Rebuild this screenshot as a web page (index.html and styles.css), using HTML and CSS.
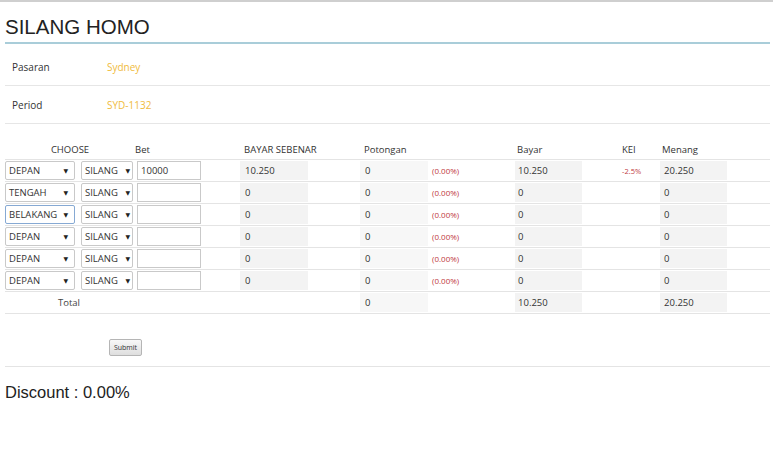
FILE: index.html
```html
<!DOCTYPE html>
<html>
<head>
<meta charset="utf-8">
<link rel="stylesheet" href="styles.css">
</head>
<body>
<div class="page">
  <h1 class="title">SILANG HOMO</h1>
  <div class="info">
    <div class="info-row first"><span class="info-label">Pasaran</span><span class="info-value">Sydney</span></div>
    <div class="info-row"><span class="info-label">Period</span><span class="info-value">SYD-1132</span></div>
  </div>

  <table class="bet-table">
    <colgroup>
      <col class="c1"><col class="c2"><col class="c3"><col class="c4"><col class="c5"><col class="c6"><col class="c7"><col class="c8"><col class="c9">
    </colgroup>
    <thead>
      <tr>
        <th colspan="2" class="h-center">CHOOSE</th>
        <th class="h-bet">Bet</th>
        <th class="h-bs">BAYAR SEBENAR</th>
        <th class="h-pot">Potongan</th>
        <th></th>
        <th class="h-small">Bayar</th>
        <th class="h-small">KEI</th>
        <th class="h-small">Menang</th>
      </tr>
    </thead>
    <tbody>
      <tr>
        <td><div class="sel sel1"><span>DEPAN</span><span class="arrow">▼</span></div></td>
        <td><div class="sel sel2"><span>SILANG</span><span class="arrow">▼</span></div></td>
        <td><div class="inp">10000</div></td>
        <td><div class="box box-bs">10.250</div></td>
        <td><div class="box box-pot">0</div></td>
        <td><span class="pct">(0.00%)</span></td>
        <td><div class="box box-bayar">10.250</div></td>
        <td><span class="kei">-2.5%</span></td>
        <td><div class="box box-menang">20.250</div></td>
      </tr>
      <tr>
        <td><div class="sel sel1"><span>TENGAH</span><span class="arrow">▼</span></div></td>
        <td><div class="sel sel2"><span>SILANG</span><span class="arrow">▼</span></div></td>
        <td><div class="inp"></div></td>
        <td><div class="box box-bs">0</div></td>
        <td><div class="box box-pot">0</div></td>
        <td><span class="pct">(0.00%)</span></td>
        <td><div class="box box-bayar">0</div></td>
        <td></td>
        <td><div class="box box-menang">0</div></td>
      </tr>
      <tr>
        <td><div class="sel sel1 focus"><span>BELAKANG</span><span class="arrow">▼</span></div></td>
        <td><div class="sel sel2"><span>SILANG</span><span class="arrow">▼</span></div></td>
        <td><div class="inp"></div></td>
        <td><div class="box box-bs">0</div></td>
        <td><div class="box box-pot">0</div></td>
        <td><span class="pct">(0.00%)</span></td>
        <td><div class="box box-bayar">0</div></td>
        <td></td>
        <td><div class="box box-menang">0</div></td>
      </tr>
      <tr>
        <td><div class="sel sel1"><span>DEPAN</span><span class="arrow">▼</span></div></td>
        <td><div class="sel sel2"><span>SILANG</span><span class="arrow">▼</span></div></td>
        <td><div class="inp"></div></td>
        <td><div class="box box-bs">0</div></td>
        <td><div class="box box-pot">0</div></td>
        <td><span class="pct">(0.00%)</span></td>
        <td><div class="box box-bayar">0</div></td>
        <td></td>
        <td><div class="box box-menang">0</div></td>
      </tr>
      <tr>
        <td><div class="sel sel1"><span>DEPAN</span><span class="arrow">▼</span></div></td>
        <td><div class="sel sel2"><span>SILANG</span><span class="arrow">▼</span></div></td>
        <td><div class="inp"></div></td>
        <td><div class="box box-bs">0</div></td>
        <td><div class="box box-pot">0</div></td>
        <td><span class="pct">(0.00%)</span></td>
        <td><div class="box box-bayar">0</div></td>
        <td></td>
        <td><div class="box box-menang">0</div></td>
      </tr>
      <tr>
        <td><div class="sel sel1"><span>DEPAN</span><span class="arrow">▼</span></div></td>
        <td><div class="sel sel2"><span>SILANG</span><span class="arrow">▼</span></div></td>
        <td><div class="inp"></div></td>
        <td><div class="box box-bs">0</div></td>
        <td><div class="box box-pot">0</div></td>
        <td><span class="pct">(0.00%)</span></td>
        <td><div class="box box-bayar">0</div></td>
        <td></td>
        <td><div class="box box-menang">0</div></td>
      </tr>
      <tr class="total-row">
        <td colspan="2" class="total-label">Total</td>
        <td></td>
        <td></td>
        <td><div class="box box-pot">0</div></td>
        <td></td>
        <td><div class="box box-bayar">10.250</div></td>
        <td></td>
        <td><div class="box box-menang">20.250</div></td>
      </tr>
    </tbody>
  </table>

  <div class="submit-row">
    <button class="submit" type="button">Submit</button>
  </div>

  <div class="discount">Discount : 0.00%</div>
</div>
</body>
</html>
```

FILE: styles.css
```css
html, body {
  margin: 0;
  padding: 0;
  background: #ffffff;
}

body {
  font-family: "Open Sans", "DejaVu Sans", sans-serif;
  color: #333333;
}

.page {
  border-top: 2px solid #cfcfcf;
  padding: 0 3px 0 5px;
  width: 765px;
}

.title {
  margin: 0;
  height: 42px;
  box-sizing: border-box;
  padding-top: 12px;
  font-family: "Liberation Sans", Arial, sans-serif;
  font-weight: normal;
  font-size: 20.5px;
  line-height: 26px;
  color: #222222;
  border-bottom: 2px solid #a9cdd9;
}

.info {
  display: flex;
  flex-direction: column;
}

.info-row {
  display: flex;
  align-items: center;
  height: 37px;
  border-bottom: 1px solid #e6e6e6;
  font-size: 10px;
}

.info-row.first {
  height: 42px;
  padding-top: 4px;
  box-sizing: border-box;
}

.info-label {
  width: 95px;
  padding-left: 7px;
  color: #333333;
}

.info-value {
  color: #f0bb3c;
}

.bet-table {
  margin-top: 17px;
  width: 765px;
  table-layout: fixed;
  border-collapse: collapse;
  font-size: 9.5px;
}

.c1 { width: 74px; }
.c2 { width: 56px; }
.c3 { width: 103px; }
.c4 { width: 120px; }
.c5 { width: 70px; }
.c6 { width: 85px; }
.c7 { width: 105px; }
.c8 { width: 40px; }
.c9 { width: 112px; }

.bet-table th {
  font-weight: normal;
  text-align: left;
  height: 18px;
  padding: 0 0 0 4px;
  color: #333333;
  vertical-align: middle;
  line-height: 12px;
}

.bet-table th.h-center {
  text-align: center;
  padding: 0;
}

.bet-table th.h-bet { padding-left: 0; }
.bet-table th.h-bs { padding-left: 6px; }
.bet-table th.h-pot { padding-left: 6px; }

.bet-table tbody tr {
  border-top: 1px solid #e4e4e4;
}

.bet-table tbody tr.total-row {
  border-bottom: 1px solid #e4e4e4;
}

.bet-table td {
  height: 21px;
  padding: 0;
    vertical-align: middle;
}

.sel {
  display: flex;
  justify-content: space-between;
  align-items: center;
  box-sizing: border-box;
  height: 19px;
  border: 1px solid #c9c9c9;
  border-radius: 2px;
  background: #ffffff;
  padding: 0 6px 0 3px;
  font-size: 9.5px;
  color: #333333;
}

.sel.focus {
  border-color: #86a9d3;
}

.sel1 { width: 70px; }
.sel2 { width: 52px; margin-left: 2px; padding-right: 2px; }

.arrow {
  font-size: 6px;
  color: #222222;
}

.inp {
  box-sizing: border-box;
  width: 64px;
  height: 19px;
  margin-left: 2px;
  border: 1px solid #c9c9c9;
  padding: 0 3px;
  line-height: 17px;
  color: #333333;
}

.box {
  box-sizing: border-box;
  height: 19px;
  line-height: 19px;
  margin-left: 2px;
  background: #f3f3f3;
  color: #333333;
}

.box-bs { width: 68px; padding-left: 5px; }
.box-pot { width: 68px; padding-left: 5px; background: #f7f7f7; }
.box-bayar { width: 67px; padding-left: 3px; }
.box-menang { width: 67px; padding-left: 4px; }

.pct {
  padding-left: 4px;
  font-size: 8px;
  color: #c0393e;
}

.kei {
  padding-left: 4px;
  font-size: 7.5px;
  color: #c0393e;
}

.total-label {
  padding-left: 53px !important;
  color: #444444;
}

.submit-row {
  height: 53px;
  box-sizing: border-box;
  padding-top: 25px;
  padding-left: 104px;
  border-bottom: 1px solid #e4e4e4;
}

.submit {
  display: block;
  width: 33px;
  height: 17px;
  padding: 0;
  border: 1px solid #b5b5b5;
  border-radius: 2px;
  background: linear-gradient(#f8f8f8, #dedede);
  font-family: "Open Sans", "DejaVu Sans", sans-serif;
  font-size: 7px;
  color: #333333;
}

.discount {
  margin-top: 16px;
  font-family: "Liberation Sans", Arial, sans-serif;
  font-size: 16.5px;
  color: #222222;
}
```
